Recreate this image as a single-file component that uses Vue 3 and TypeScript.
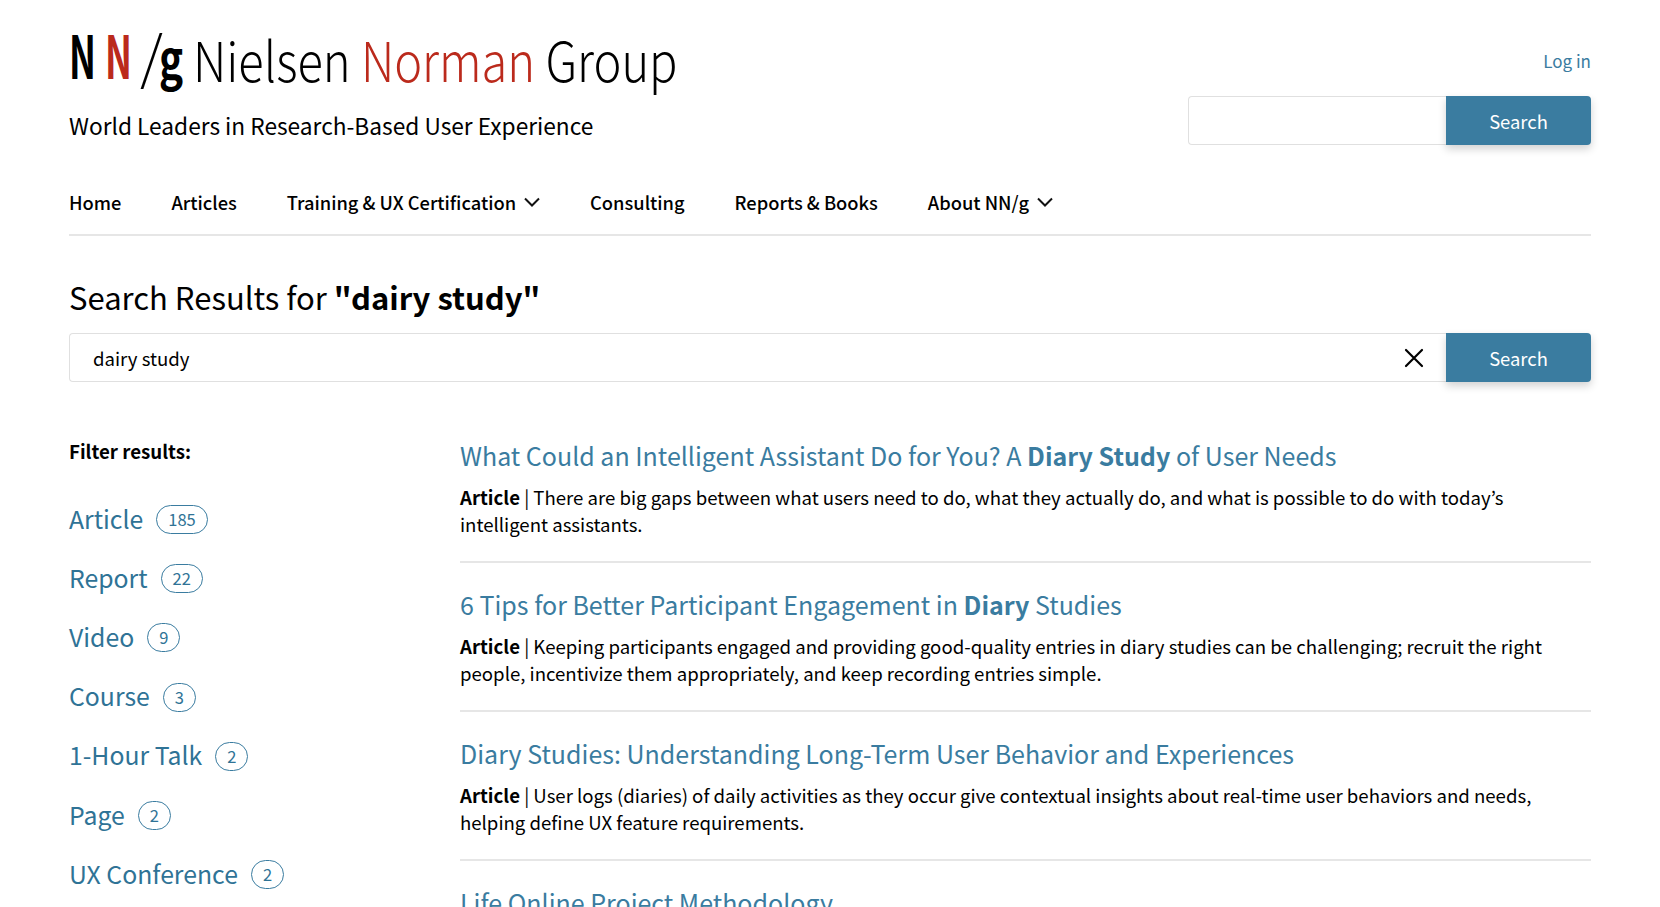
<script setup lang="ts">
const navItems = [
  { label: 'Home', caret: false },
  { label: 'Articles', caret: false },
  { label: 'Training & UX Certification', caret: true },
  { label: 'Consulting', caret: false },
  { label: 'Reports & Books', caret: false },
  { label: 'About NN/g', caret: true },
]
const filters = [
  { label: 'Article', count: 185 },
  { label: 'Report', count: 22 },
  { label: 'Video', count: 9 },
  { label: 'Course', count: 3 },
  { label: '1-Hour Talk', count: 2 },
  { label: 'Page', count: 2 },
  { label: 'UX Conference', count: 2 },
]
const results = [
  {
    title: [
      { t: 'What Could an Intelligent Assistant Do for You? A ', b: false },
      { t: 'Diary Study', b: true },
      { t: ' of User Needs', b: false },
    ],
    text: 'There are big gaps between what users need to do, what they actually do, and what is possible to do with today’s intelligent assistants.',
  },
  {
    title: [
      { t: '6 Tips for Better Participant Engagement in ', b: false },
      { t: 'Diary', b: true },
      { t: ' Studies', b: false },
    ],
    text: 'Keeping participants engaged and providing good-quality entries in diary studies can be challenging; recruit the right people, incentivize them appropriately, and keep recording entries simple.',
  },
  {
    title: [{ t: 'Diary Studies: Understanding Long-Term User Behavior and Experiences', b: false }],
    text: 'User logs (diaries) of daily activities as they occur give contextual insights about real-time user behaviors and needs, helping define UX feature requirements.',
  },
]
</script>

<template>
  <div class="page">
    <header class="top">
      <div class="brand">
        <div class="logo">
          <span class="mark">
            <b class="n">N</b><b class="n red">N</b><span class="slash">/</span><b class="g">g</b>
          </span>
          <span class="word">Nielsen <span class="red">Norman</span> Group</span>
        </div>
        <div class="tagline">World Leaders in Research-Based User Experience</div>
      </div>
      <div class="tools">
        <a class="login">Log in</a>
        <div class="searchbar small">
          <div class="field"></div>
          <button class="btn">Search</button>
        </div>
      </div>
    </header>

    <nav class="nav">
      <a v-for="n in navItems" :key="n.label" class="navitem">
        {{ n.label }}
        <svg v-if="n.caret" class="caret" viewBox="0 0 16 10" width="16" height="10" fill="none" stroke="#111" stroke-width="2">
          <path d="M1 1.5 8 8.5 15 1.5" />
        </svg>
      </a>
    </nav>

    <h1 class="heading">Search Results for <b>"dairy study"</b></h1>

    <div class="searchbar">
      <div class="field big">
        <span>dairy study</span>
        <svg viewBox="0 0 20 20" width="20" height="20" fill="none" stroke="#000" stroke-width="2.2" stroke-linecap="round">
          <path d="M2 2 18 18M18 2 2 18" />
        </svg>
      </div>
      <button class="btn">Search</button>
    </div>

    <main class="content">
      <aside class="filters">
        <div class="filter-title">Filter results:</div>
        <ul>
          <li v-for="f in filters" :key="f.label">
            <a>{{ f.label }}</a><span class="pill">{{ f.count }}</span>
          </li>
        </ul>
      </aside>
      <section class="results">
        <article v-for="(r, i) in results" :key="i" class="result">
          <h2><template v-for="(p, j) in r.title" :key="j"><b v-if="p.b">{{ p.t }}</b><template v-else>{{ p.t }}</template></template></h2>
          <p><b>Article</b> | {{ r.text }}</p>
        </article>
        <article class="result last"><h2>Life Online Project Methodology</h2></article>
      </section>
    </main>
  </div>
</template>

<style>
html, body { margin: 0; background: #fff; overflow: hidden; height: 907px; }
</style>

<style scoped>
.page {
  box-sizing: border-box;
  width: 1660px;
  height: 907px;
  overflow: hidden;
  padding: 0 69px;
  font-family: "Noto Sans CJK JP", "Noto Sans", sans-serif;
  color: #000;
}
.top { display: flex; justify-content: space-between; height: 165px; }
.brand { padding-top: 23px; }
.logo { display: flex; align-items: baseline; height: 66px; line-height: 66px; white-space: nowrap; }
.mark { display: inline-flex; align-items: baseline; width: 124px; height: 66px; position: relative; top: -3px; }
.n {
  display: inline-block;
  width: 25px;
  margin-right: 11px;
  font-size: 60px;
  font-weight: 700;
  transform: scaleX(0.6);
  transform-origin: left center;
}
.slash { display: inline-block; width: 19px; margin-left: -1px; font-size: 58px; font-weight: 300; }
.g {
  display: inline-block;
  font-size: 54px;
  font-weight: 700;
  transform: scaleX(0.75);
  transform-origin: left center;
}
.word {
  display: inline-block;
  font-size: 55px;
  font-weight: 300;
  transform: scaleX(0.855);
  transform-origin: left center;
}
.red { color: #bb2a1c; }
.tagline { margin-top: 21px; font-size: 22.7px; line-height: 32px; }
.tools { display: flex; flex-direction: column; align-items: flex-end; padding-top: 47px; }
.login { font-size: 17px; line-height: 27px; color: #3a7ca0; margin-bottom: 22px; }
.searchbar { display: flex; height: 49px; }
.searchbar.small { width: 403px; }
.field {
  flex: 1;
  box-sizing: border-box;
  border: 1.5px solid #e0e0e0;
  border-right: 0;
  border-radius: 4px 0 0 4px;
}
.field.big {
  display: flex;
  align-items: center;
  justify-content: space-between;
  padding: 0 22px 0 23px;
  font-size: 18.6px;
  line-height: 26px;
}
.btn {
  width: 145px;
  border: 0;
  border-radius: 0 4px 4px 0;
  background: #3a7ca0;
  color: #fff;
  font: 400 18.4px/26px "Noto Sans CJK JP", sans-serif;
  box-shadow: 0 4px 8px rgba(0, 0, 0, 0.18);
  padding: 0;
}
.nav {
  display: flex;
  gap: 50px;
  height: 71px;
  box-sizing: border-box;
  padding-top: 23px;
  border-bottom: 2px solid #e6e6e6;
}
.navitem { display: flex; align-items: center; gap: 8px; height: 28px; font-size: 18.3px; font-weight: 500; white-space: nowrap; }
.heading { margin: 39px 0 14px; font-size: 31px; line-height: 44px; font-weight: 400; }
.heading b { font-weight: 700; }
.content { display: flex; margin-top: 56px; }
.filters { width: 391px; flex: none; }
.filter-title { font-size: 18.7px; font-weight: 700; line-height: 26px; }
.filters ul { list-style: none; margin: 24px 0 0; padding: 0; }
.filters li { display: flex; align-items: center; height: 59.2px; font-size: 24.8px; color: #2f7396; white-space: nowrap; }
.pill {
  box-sizing: border-box;
  min-width: 33px;
  height: 29px;
  margin-left: 13px;
  margin-top: 4px;
  padding: 0 11px;
  border: 1.5px solid #3a7ca0;
  border-radius: 15px;
  font-size: 16.5px;
  line-height: 26px;
  text-align: center;
}
.results { flex: 1; min-width: 0; }
.result { padding-bottom: 24px; margin-bottom: 24px; border-bottom: 2px solid #e6e6e6; }
.result.last { border: 0; }
.result h2 { margin: 0 0 12px; font-size: 25px; line-height: 34px; font-weight: 400; color: #3a7ca0; }
.result h2 b { font-weight: 700; }
.result p { margin: 0; font-size: 18.6px; line-height: 26.5px; }
.result p b { font-weight: 700; }
</style>
